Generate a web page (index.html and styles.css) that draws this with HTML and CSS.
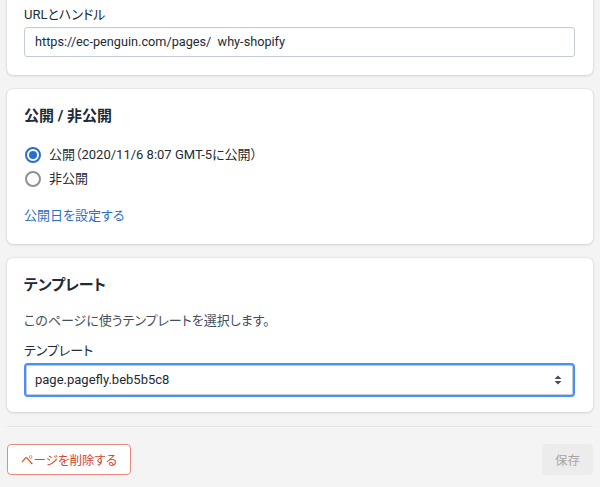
FILE: index.html
```html
<!DOCTYPE html>
<html lang="ja">
  <head>
    <meta charset="UTF-8" />
    <meta name="viewport" content="width=device-width, initial-scale=1.0" />
    <title>ページ設定</title>
    <link rel="stylesheet" href="styles.css">
  </head>
  <body>
    <main class="page">
      <section class="card card-first">
        <label class="field-label">URLとハンドル</label>
        <div class="text-input">https://ec-penguin.com/pages/&nbsp;&nbsp;why-shopify</div>
      </section>

      <section class="card">
        <h2 class="card-title">公開 / 非公開</h2>
        <div class="radio-list">
          <label class="radio-row">
            <span class="radio checked"></span>
            <span>公開（2020/11/6 8:07 GMT-5に公開）</span>
          </label>
          <label class="radio-row">
            <span class="radio"></span>
            <span>非公開</span>
          </label>
        </div>
        <a class="link" href="#">公開日を設定する</a>
      </section>

      <section class="card card-last">
        <h2 class="card-title">テンプレート</h2>
        <p class="help-text">このページに使うテンプレートを選択します。</p>
        <label class="field-label">テンプレート</label>
        <div class="select">
          <span>page.pagefly.beb5b5c8</span>
          <svg class="select-arrow" width="10" height="12" viewBox="0 0 10 12">
            <path d="M1.5 5 L5 1.5 L8.5 5 Z" fill="#454f5b" />
            <path d="M1.5 7 L5 10.5 L8.5 7 Z" fill="#454f5b" />
          </svg>
        </div>
      </section>

      <div class="divider"></div>

      <div class="actions">
        <button class="btn btn-danger">ページを削除する</button>
        <button class="btn btn-disabled">保存</button>
      </div>
    </main>
  </body>
</html>
```

FILE: styles.css
```css
* {
  margin: 0;
  padding: 0;
  box-sizing: border-box;
  font-family: Roboto, "Noto Sans CJK JP", sans-serif;
  font-feature-settings: "palt";
}

body {
  background-color: #f4f4f4;
  color: #212b36;
  font-size: 13px;
  line-height: 20px;
}

.page {
  padding: 0 7px;
}

.card {
  background-color: #fff;
  border-radius: 6px;
  box-shadow: 0 0 0 1px rgba(63, 63, 68, 0.05), 0 1px 3px rgba(63, 63, 68, 0.15);
  padding: 17px 18px 18px 17px;
  margin-bottom: 14px;
}
.card-first {
  margin-top: -12px;
}
.card-last {
  padding-bottom: 15px;
}

.card-title {
  font-size: 15px;
  font-weight: 700;
  line-height: 20px;
}

.field-label {
  display: block;
  margin-bottom: 2px;
}

.text-input {
  height: 30px;
  border: 1px solid #c4cdd5;
  border-radius: 3px;
  padding: 0 10px;
  display: flex;
  align-items: center;
  font-size: 12.7px;
  box-shadow: inset 0 1px 0 rgba(99, 115, 129, 0.05);
}

.radio-list {
  margin-top: 19px;
  display: flex;
  flex-direction: column;
  gap: 4px;
}
.radio-row {
  display: flex;
  align-items: center;
  gap: 8px;
}
.radio {
  width: 16px;
  height: 16px;
  border-radius: 50%;
  border: 2px solid #8c9196;
  margin-left: 1px;
  display: flex;
  align-items: center;
  justify-content: center;
}
.radio.checked {
  border-color: #2c6ecb;
}
.radio.checked::after {
  content: "";
  width: 8px;
  height: 8px;
  border-radius: 50%;
  background-color: #2c6ecb;
}

.link {
  display: block;
  margin-top: 17px;
  color: #2c6ecb;
  text-decoration: none;
}

.help-text {
  margin-top: 16px;
  margin-bottom: 10px;
  color: #454f5b;
}

.select {
  height: 34px;
  border: 2px solid #458fff;
  border-radius: 4px;
  padding: 0 9px;
  display: flex;
  align-items: center;
  justify-content: space-between;
  box-shadow: inset 0 0 0 1px #c4cdd5;
}
.select-arrow {
  margin-right: 1px;
}

.divider {
  height: 1px;
  background-color: #e3e3e3;
}

.actions {
  display: flex;
  justify-content: space-between;
  margin-top: 17px;
}

.btn {
  height: 31px;
  border-radius: 4px;
  font-size: 12.5px;
  padding: 0;
  white-space: nowrap;
  cursor: pointer;
}
.btn-danger {
  background-color: #fff;
  border: 1px solid #e88a7e;
  color: #d8452f;
  width: 124px;
}
.btn-disabled {
  background-color: #ececec;
  border: none;
  color: #a6a6a6;
  width: 51px;
}
```
